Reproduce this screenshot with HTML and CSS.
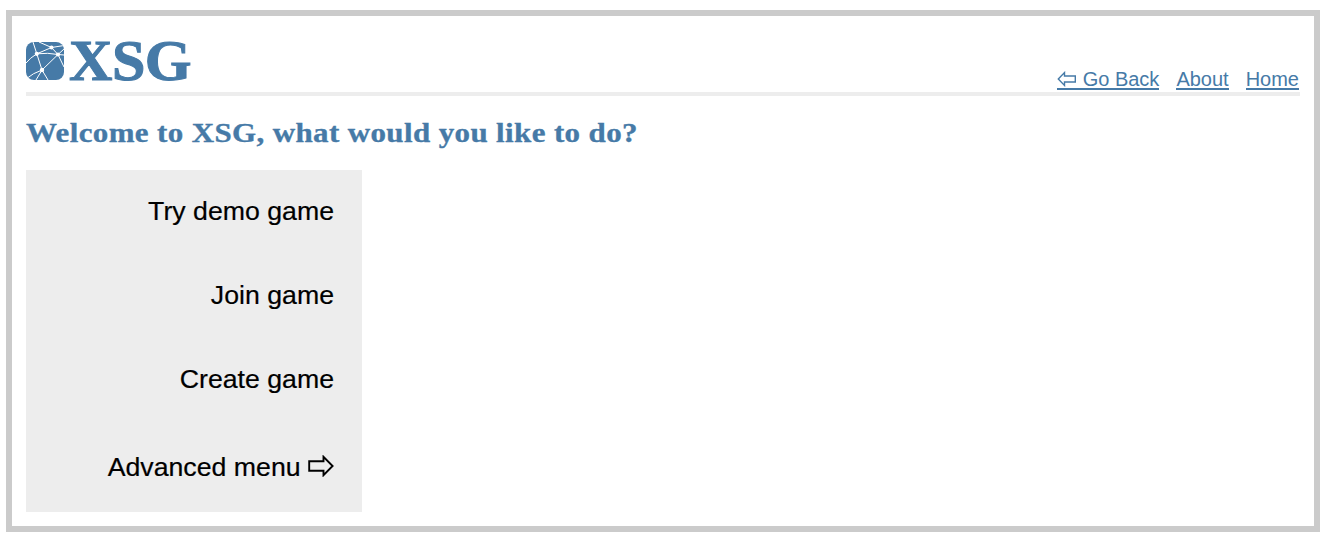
FILE: index.html
```html
<!DOCTYPE html>
<html lang="en">
<head>
<meta charset="utf-8">
<title>XSG</title>
<link rel="stylesheet" href="styles.css">
</head>
<body>
<div class="frame">
  <header class="header">
    <div class="logo">
      <svg class="logo-mark" viewBox="0 0 38 38" aria-hidden="true">
        <defs><clipPath id="tile"><rect width="38" height="38" rx="8"/></clipPath></defs>
        <g clip-path="url(#tile)">
          <rect width="38" height="38" fill="#467aa7"/>
          <g fill="none" stroke="#fff" stroke-width="1">
            <path d="M10.8 11.8Q4 16 0 21M10.8 11.8L7 0M10.8 11.8L25.5 5.5M10.8 11.8Q22 10.5 32 12.5M10.8 11.8L16 28M16 28L32 12.5M25.5 5.5L32 12.5M25.5 5.5L13 0M25.5 5.5L38 3.5M32 12.5L38 7M32 12.5L38 13M32 12.5L38 25M16 28Q7 31 0 37M16 28L10 38M16 28L22 38"/>
          </g>
          <g fill="#fff"><circle cx="10.8" cy="11.8" r="2.1"/><circle cx="25.5" cy="5.5" r="2"/><circle cx="32" cy="12.5" r="2.1"/><circle cx="16" cy="28" r="2.2"/></g>
        </g>
      </svg>
      <span class="logo-text">XSG</span>
    </div>
    <nav class="nav">
      <a href="#"><svg class="back-arrow" viewBox="0 0 20 16" aria-hidden="true"><path d="M1.3 8L7.5 1.6V5H18.3V11H7.5V14.4Z" fill="none" stroke="currentColor" stroke-width="1.4"/></svg> Go Back</a>
      <a href="#">About</a>
      <a href="#">Home</a>
    </nav>
  </header>
  <h1 class="title">Welcome to XSG, what would you like to do?</h1>
  <div class="menu">
    <a class="item" href="#">Try demo game</a>
    <a class="item" href="#">Join game</a>
    <a class="item" href="#">Create game</a>
    <a class="item item-last" href="#">Advanced menu <svg class="next-arrow" viewBox="0 0 26 22" aria-hidden="true"><path d="M1.2 6.2H15.5V1.8L24.6 11L15.5 20.2V15.8H1.2Z" fill="none" stroke="currentColor" stroke-width="1.9"/></svg></a>
  </div>
</div>
</body>
</html>
```
FILE: styles.css
```css
body {
  margin: 0;
  background: #fff;
  font-family: "Liberation Sans", Arial, sans-serif;
}
.frame {
  box-sizing: border-box;
  width: 1314px;
  height: 522px;
  margin: 10px 6px 0;
  border: 6px solid #cbcbcb;
  padding: 0 14px;
}
.header {
  box-sizing: border-box;
  display: flex;
  justify-content: space-between;
  height: 80px;
  border-bottom: 4px solid #ededed;
  color: #467aa7;
}
.logo {
  display: flex;
  gap: 5px;
}
.logo-mark {
  width: 38px;
  height: 38px;
  margin-top: 26px;
}
.logo-text {
  margin-top: 13px;
  font: bold 57px/64px "Liberation Serif", Georgia, serif;
  letter-spacing: -0.5px;
  -webkit-text-stroke: 1px #467aa7;
  transform: scaleX(1.055);
  transform-origin: left;
}
.nav {
  display: flex;
  gap: 17px;
  padding: 51px 1px 0 0;
  font-size: 20px;
  line-height: 24px;
}
.nav a {
  height: 23px;
  box-sizing: border-box;
  border-bottom: 2px solid #467aa7;
  color: #467aa7;
  text-decoration: none;
}
.back-arrow {
  width: 20px;
  height: 16px;
  vertical-align: -1px;
}
.title {
  width: max-content;
  margin: 20px 0 0;
  height: 54px;
  color: #467aa7;
  font: bold 28px/34px "Liberation Serif", Georgia, serif;
  letter-spacing: 0.35px;
  white-space: nowrap;
  -webkit-text-stroke: 0.35px #467aa7;
  transform: scaleX(1.105);
  transform-origin: left;
}
.menu {
  box-sizing: border-box;
  width: 336px;
  height: 342px;
  padding: 0 28px;
  background: #ededed;
}
.item {
  display: block;
  height: 84px;
  line-height: 83px;
  color: #000;
  font-size: 26.7px;
  text-align: right;
  text-decoration: none;
  -webkit-text-stroke: 0.2px #000;
}
.item-last {
  line-height: 91px;
}
.next-arrow {
  width: 26px;
  height: 22px;
  vertical-align: -1px;
}
```
